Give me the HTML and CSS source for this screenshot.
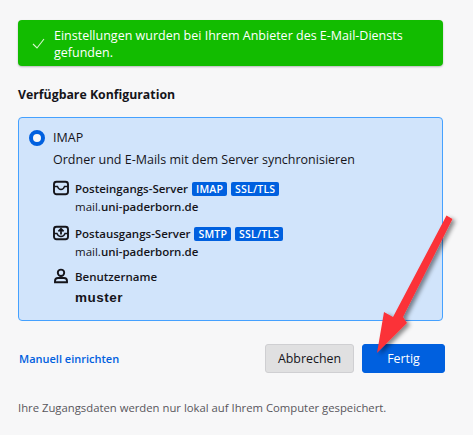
FILE: index.html
```html
<!DOCTYPE html>
<html lang="de">
<head>
    <meta charset="UTF-8">
    <meta name="viewport" content="width=device-width, initial-scale=1.0">
    <title>Konto einrichten</title>
    <link rel="stylesheet" href="styles.css">
</head>
<body>
    <div class="notice">
        <svg class="notice-icon" width="16" height="16" viewBox="0 0 16 16"><path d="M1 8 L5 12 L12 3" fill="none" stroke="#d8f5d0" stroke-width="1.1"/></svg>
        <p>Einstellungen wurden bei Ihrem Anbieter des E-Mail-Diensts gefunden.</p>
    </div>

    <h2 class="section-title">Verfügbare Konfiguration</h2>

    <div class="config">
        <div class="config-head">
            <span class="radio"></span>
            <span>IMAP</span>
        </div>
        <p class="config-desc">Ordner und E-Mails mit dem Server synchronisieren</p>

        <div class="server">
            <svg class="server-icon" width="16" height="16" viewBox="0 0 16 16"><rect x="1" y="1.8" width="14" height="12.4" rx="2.5" fill="none" stroke="#15141a" stroke-width="1.9"/><path d="M1 6.5 H4.5 Q5.5 9.5 8 9.5 Q10.5 9.5 11.5 6.5 H15" fill="none" stroke="#15141a" stroke-width="1.4"/></svg>
            <div>
                <div class="server-name">Posteingangs-Server <span class="tag">IMAP</span> <span class="tag">SSL/TLS</span></div>
                <div class="host">mail.<b>uni-paderborn.de</b></div>
            </div>
        </div>

        <div class="server">
            <svg class="server-icon" width="16" height="16" viewBox="0 0 16 16"><rect x="1" y="1.8" width="14" height="12.4" rx="2.5" fill="none" stroke="#15141a" stroke-width="1.9"/><path d="M1 8.5 H4 Q5 11.5 8 11.5 Q11 11.5 12 8.5 H15" fill="none" stroke="#15141a" stroke-width="1.4"/><path d="M8 9.5 V4 M5.4 6.4 L8 3.8 L10.6 6.4" fill="none" stroke="#15141a" stroke-width="1.8"/></svg>
            <div>
                <div class="server-name">Postausgangs-Server <span class="tag">SMTP</span> <span class="tag">SSL/TLS</span></div>
                <div class="host">mail.<b>uni-paderborn.de</b></div>
            </div>
        </div>

        <div class="server user">
            <svg class="server-icon" width="16" height="16" viewBox="0 0 16 16"><circle cx="8" cy="4.8" r="3.2" fill="none" stroke="#15141a" stroke-width="1.9"/><path d="M2 14.2 V13 Q2 10 5 10 H11 Q14 10 14 13 V14.2 Z" fill="none" stroke="#15141a" stroke-width="1.9"/></svg>
            <div>
                <div class="server-name">Benutzername</div>
                <div class="username">muster</div>
            </div>
        </div>
    </div>

    <div class="actions">
        <a class="manual-link" href="#">Manuell einrichten</a>
        <div class="buttons">
            <button class="btn" type="button">Abbrechen</button>
            <button class="btn btn-primary" type="button">Fertig</button>
        </div>
    </div>

    <p class="footnote">Ihre Zugangsdaten werden nur lokal auf Ihrem Computer gespeichert.</p>

    <!-- red annotation arrow on top of the screenshot -->
    <svg class="arrow" width="473" height="435" viewBox="0 0 473 435">
        <defs>
            <filter id="arrowShadow" x="-30%" y="-30%" width="160%" height="160%">
                <feDropShadow dx="3" dy="2" stdDeviation="2" flood-color="#000" flood-opacity="0.45"/>
            </filter>
        </defs>
        <path d="M446.5 215.5 L452.5 219 L403 317 L407 323 L377 353 L384 312 L393 317 Z" fill="#fb3237" filter="url(#arrowShadow)"/>
    </svg>
</body>
</html>
```

FILE: styles.css
```css
body {
    margin: 0;
    padding: 20px 30px 0 18px;
    height: 435px;
    box-sizing: border-box;
    overflow: hidden;
    position: relative;
    background: #f7f7f8;
    color: #15141a;
    font-family: "Open Sans", sans-serif;
    font-size: 12.5px;
}

p {
    margin: 0;
}

.notice {
    display: flex;
    align-items: center;
    gap: 6px;
    height: 46px;
    box-sizing: border-box;
    padding: 2px 12px 0 14px;
    background: #12bc00;
    border-radius: 4px;
    box-shadow: 0 1px 2px rgba(0, 0, 0, 0.25);
    color: #fff;
    line-height: 17px;
}

.notice-icon {
    flex: none;
}

.section-title {
    margin: 20px 0 14px;
    font-size: 12.3px;
    line-height: 17px;
    font-weight: 700;
}

.config {
    height: 204px;
    box-sizing: border-box;
    padding: 11px 10px 0 10px;
    background: #d1e4fb;
    border: 1px solid #45a1ff;
    border-radius: 4px;
}

.config-head {
    display: flex;
    align-items: center;
    gap: 8px;
    line-height: 17px;
}

.radio {
    width: 8px;
    height: 8px;
    border: 4px solid #0060df;
    border-radius: 50%;
    background: #f7f7f8;
}

.config-desc {
    margin: 5px 0 12px 24px;
    line-height: 17px;
}

.server {
    display: flex;
    gap: 6px;
    margin: 0 0 9px 24px;
    font-size: 11.5px;
}

.server.user {
    margin-top: -2px;
}

.server-icon {
    flex: none;
}

.server-name {
    font-weight: 600;
    line-height: 17px;
}

.tag {
    display: inline-block;
    margin-left: 1px;
    padding: 0 4px;
    background: #0060df;
    border-radius: 2px;
    color: #fff;
    font-size: 10.5px;
    letter-spacing: 0.2px;
    line-height: 14px;
    font-weight: 600;
}

.host {
    line-height: 19px;
}

.host b {
    font-weight: 600;
}

.username {
    margin-top: 5px;
    font-size: 13.5px;
    letter-spacing: 0.5px;
    font-weight: 700;
    font-family: "Liberation Sans", sans-serif;
}

.actions {
    display: flex;
    justify-content: space-between;
    align-items: center;
    margin: 23px -2px 0 1px;
}

.manual-link {
    color: #0060df;
    font-size: 11px;
    font-weight: 600;
    text-decoration: none;
}

.buttons {
    display: flex;
    gap: 8px;
}

.btn {
    height: 29px;
    width: 89px;
    box-sizing: border-box;
    background: #e0e0e1;
    border: 1px solid #cfcfd2;
    border-radius: 3px;
    color: #15141a;
    font-family: inherit;
    font-size: 12.4px;
}

.btn-primary {
    width: 83px;
    background: #0060df;
    border-color: #0060df;
    color: #fff;
}

.footnote {
    margin-top: 26px;
    color: #57565c;
    font-size: 11.3px;
    line-height: 17px;
}

.arrow {
    position: absolute;
    top: 0;
    left: 0;
    pointer-events: none;
}
```
